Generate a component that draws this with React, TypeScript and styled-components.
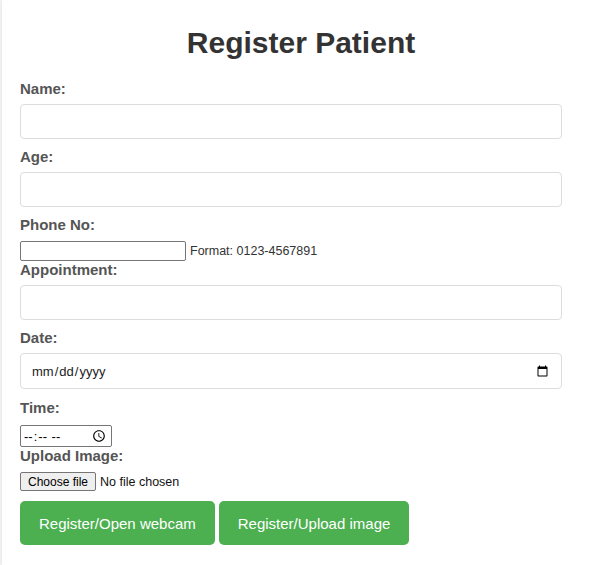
import React from "react";
import styled, { createGlobalStyle } from "styled-components";

const Global = createGlobalStyle`
  html, body { margin: 0; padding: 0; }
  body {
    background: #f4f4f4;
    font-family: "Liberation Sans", Arial, sans-serif;
  }
`;

const Container = styled.div`
  display: flow-root;
  margin-left: 2px;
  min-height: 565px;
  box-sizing: border-box;
  background: #fff;
  box-shadow: 0 0 4px rgba(0, 0, 0, 0.08);
  padding: 26px 16px 20px 18px;
`;

const Title = styled.h2`
  margin: 0 0 20px;
  text-align: center;
  font-size: 30px;
  line-height: 34px;
  font-weight: bold;
  color: #333;
`;

const Form = styled.form`
  display: block;
`;

const Label = styled.label`
  display: block;
  margin: 0 0 7px;
  font-size: 15px;
  line-height: 17px;
  font-weight: bold;
  color: #555;
`;

const Field = styled.input<{ $h: number; $mb: number }>`
  display: block;
  box-sizing: border-box;
  width: calc(100% - 20px);
  height: ${(p) => p.$h}px;
  margin: 0 0 ${(p) => p.$mb}px;
  padding: 0 10px;
  border: 1px solid #ddd;
  border-radius: 4px;
  background: #fff;
  font-family: "Liberation Sans", Arial, sans-serif;
  font-size: 13px;
  color: #222;
  outline: none;
`;

const InlineRow = styled.div<{ $top: number }>`
  display: flex;
  align-items: center;
  gap: 4px;
  padding-top: ${(p) => p.$top}px;
`;

const PlainInput = styled.input<{ $w: number; $h: number; $ls?: number }>`
  box-sizing: border-box;
  width: ${(p) => p.$w}px;
  height: ${(p) => p.$h}px;
  margin: 0;
  padding: 1px 2px;
  border: 1px solid #767676;
  border-radius: 2px;
  background: #fff;
  font-family: "Liberation Sans", Arial, sans-serif;
  font-size: 13px;
  letter-spacing: ${(p) => p.$ls ?? 0}px;
  color: #000;
  outline: none;
`;

const Hint = styled.span`
  font-size: 12.5px;
  line-height: 14px;
  color: #333;
`;

const FileButton = styled.label`
  box-sizing: border-box;
  display: inline-flex;
  align-items: center;
  height: 19px;
  padding: 0 7px;
  border: 1px solid #767676;
  border-radius: 2px;
  background: #efefef;
  font-size: 12px;
  color: #000;
  cursor: pointer;
  input { display: none; }
`;

const FileText = styled.span`
  font-size: 12.5px;
  color: #111;
`;

const Actions = styled.div`
  display: flex;
  gap: 4px;
  margin-top: 10px;
`;

const Button = styled.button`
  height: 44px;
  padding: 0 19px;
  border: none;
  border-radius: 5px;
  background: #4caf50;
  color: #fff;
  font-family: "Liberation Sans", Arial, sans-serif;
  font-size: 15px;
  cursor: pointer;
`;

export default function App() {
  return (
    <>
      <Global />
      <Container>
        <Title>Register Patient</Title>
        <Form onSubmit={(e) => e.preventDefault()}>
          <Label htmlFor="name">Name:</Label>
          <Field id="name" type="text" $h={35} $mb={9} />

          <Label htmlFor="age">Age:</Label>
          <Field id="age" type="text" $h={35} $mb={9} />

          <Label htmlFor="phone">Phone No:</Label>
          <InlineRow $top={1}>
            <PlainInput id="phone" type="tel" $w={166} $h={20} />
            <Hint>Format: 0123-4567891</Hint>
          </InlineRow>

          <Label htmlFor="appt">Appointment:</Label>
          <Field id="appt" type="text" $h={35} $mb={9} />

          <Label htmlFor="date">Date:</Label>
          <Field id="date" type="date" $h={36} $mb={10} />

          <Label htmlFor="time">Time:</Label>
          <InlineRow $top={2}>
            <PlainInput id="time" type="time" $w={92} $h={22} $ls={2} />
          </InlineRow>

          <Label>Upload Image:</Label>
          <InlineRow $top={1}>
            <FileButton>
              Choose file
              <input type="file" accept="image/*" />
            </FileButton>
            <FileText>No file chosen</FileText>
          </InlineRow>

          <Actions>
            <Button type="button">Register/Open webcam</Button>
            <Button type="button">Register/Upload image</Button>
          </Actions>
        </Form>
      </Container>
    </>
  );
}
